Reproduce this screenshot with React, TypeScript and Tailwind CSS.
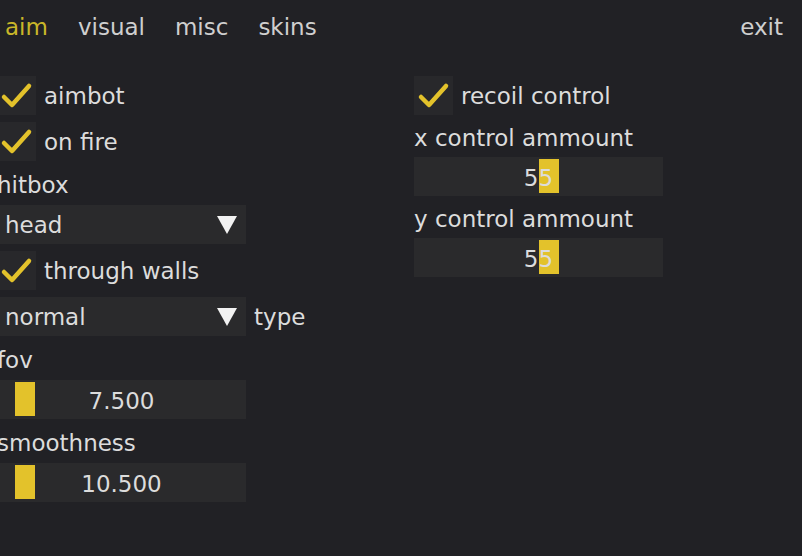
import React from "react";

const YELLOW = "#e3c22b";

function Check({ label }: { label: string }) {
  return (
    <div className="flex items-center h-[39px] gap-[8px]">
      <div className="w-[39px] h-[39px] bg-[#28282b] flex items-center justify-center">
        <svg width="39" height="39" viewBox="0 0 39 39">
          <polyline
            points="7,21 15,29 32,10"
            fill="none"
            stroke={YELLOW}
            strokeWidth="4.5"
            strokeLinecap="round"
            strokeLinejoin="round"
          />
        </svg>
      </div>
      <span className="pt-[2px]">{label}</span>
    </div>
  );
}

function Label({ text, h = "h-[30px] leading-[25px]" }: { text: string; h?: string }) {
  return <div className={`${h} flex items-end whitespace-nowrap`}>{text}</div>;
}

function Combo({ value, after }: { value: string; after?: string }) {
  return (
    <div className="flex items-center gap-[8px]">
      <div className="w-[249px] h-[39px] bg-[#2a2a2c] flex items-center">
        <span className="flex-1 pl-[8px] pt-[1px]">{value}</span>
        <div className="w-[39px] h-[39px] flex items-center justify-center">
          <svg width="20" height="18" viewBox="0 0 20 18">
            <polygon points="0,0 20,0 10,18" fill="#f2f2f2" />
          </svg>
        </div>
      </div>
      {after && <span className="pt-[2px]">{after}</span>}
    </div>
  );
}

function Slider({ value, grabLeft }: { value: string; grabLeft: number }) {
  return (
    <div className="relative w-[249px] h-[39px] bg-[#2a2a2c] flex items-center justify-center">
      <div
        className="absolute top-[2px] bottom-[3px] w-[20px]"
        style={{ left: grabLeft, background: YELLOW }}
      />
      <span className="relative pt-[3px]">{value}</span>
    </div>
  );
}

export default function App() {
  return (
    <div
      className="w-[802px] h-[556px] bg-[#212125] text-[#dcdcdc] overflow-hidden text-[23px] leading-[27px]"
      style={{ fontFamily: '"DejaVu Sans", Verdana, sans-serif' }}
    >
      <div className="ml-[-3px] w-[805px]">
        {/* Tabs */}
        <div className="flex items-center h-[54px] pr-[11px] gap-[14px]">
          <button className="px-[8px] text-[#c9b729]">aim</button>
          <button className="px-[8px] text-[#cfcfcf]">visual</button>
          <button className="px-[8px] text-[#cfcfcf]">misc</button>
          <button className="px-[8px] text-[#cfcfcf]">skins</button>
          <button className="ml-auto px-[8px] text-[#cfcfcf]">exit</button>
        </div>

        <div className="mt-[22px] grid grid-cols-[417px_249px]">
          {/* Left column */}
          <div className="flex flex-col gap-[7px]">
            <Check label="aimbot" />
            <Check label="on fire" />
            <Label text="hitbox" />
            <Combo value="head" />
            <Check label="through walls" />
            <Combo value="normal" after="type" />
            <Label text="fov" />
            <Slider value="7.500" grabLeft={18} />
            <Label text="smoothness" />
            <Slider value="10.500" grabLeft={18} />
          </div>

          {/* Right column */}
          <div className="flex flex-col gap-[7px]">
            <Check label="recoil control" />
            <Label text="x control ammount" h="h-[28px] leading-[23px]" />
            <Slider value="55" grabLeft={125} />
            <Label text="y control ammount" h="h-[28px] leading-[23px]" />
            <Slider value="55" grabLeft={125} />
          </div>
        </div>
      </div>
    </div>
  );
}
